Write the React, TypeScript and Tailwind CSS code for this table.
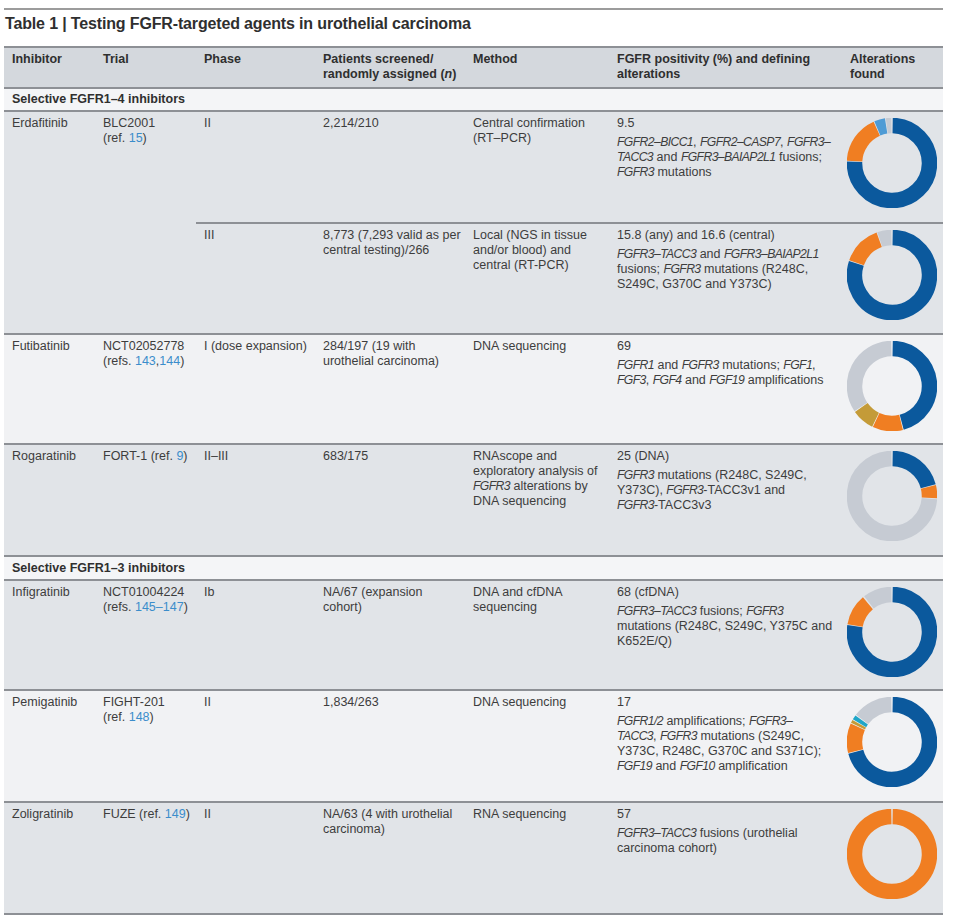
import React from 'react';

type Seg = [number, number, string];

const BLUE = '#0b599d';
const ORANGE = '#f07e22';
const LBLUE = '#4e9bd5';
const GREY = '#c6cbd3';
const KHAKI = '#c49b38';
const TEAL = '#1fa6c8';

const Donut: React.FC<{ segs: Seg[] }> = ({ segs }) => {
  const c = 45;
  const r = 37.5;
  const pt = (a: number) => [c + r * Math.sin((a * Math.PI) / 180), c - r * Math.cos((a * Math.PI) / 180)];
  return (
    <svg width={90} height={90} viewBox="0 0 90 90">
      {segs.map(([s, e, col], i) => {
        const [x1, y1] = pt(s);
        const [x2, y2] = pt(e);
        const large = e - s > 180 ? 1 : 0;
        return (
          <path
            key={i}
            d={`M${x1.toFixed(2)} ${y1.toFixed(2)} A${r} ${r} 0 ${large} 1 ${x2.toFixed(2)} ${y2.toFixed(2)}`}
            fill="none"
            stroke={col}
            strokeWidth={15.5}
          />
        );
      })}
    </svg>
  );
};

const Ref: React.FC<{ children: React.ReactNode }> = ({ children }) => (
  <span className="text-[#3b8dcb]">{children}</span>
);

// gene names: italic, set tighter like the print face
const I: React.FC<{ children: React.ReactNode }> = ({ children }) => (
  <i className="text-[12.2px] tracking-[-0.6px]">{children}</i>
);

const Fgfr: React.FC<{ n: string; children: React.ReactNode }> = ({ n, children }) => (
  <div className="w-[233px] pl-2 pt-1 whitespace-nowrap">
    <div>{n}</div>
    <div className="mt-[4px]">{children}</div>
  </div>
);

// the rest of a row from the phase column on
const Rest: React.FC<{
  phase: React.ReactNode;
  patients: React.ReactNode;
  method: React.ReactNode;
  n: string;
  alts: React.ReactNode;
  segs: Seg[];
}> = ({ phase, patients, method, n, alts, segs }) => (
  <>
    <div className="w-[119px] pl-2 pt-1 whitespace-nowrap">{phase}</div>
    <div className="w-[150px] pl-2 pt-1 whitespace-nowrap">{patients}</div>
    <div className="w-[144px] pl-2 pt-1 whitespace-nowrap">{method}</div>
    <Fgfr n={n}>{alts}</Fgfr>
    <div className="w-[101px] pl-[5px] pt-[6px]">
      <Donut segs={segs} />
    </div>
  </>
);

export default function App() {
  return (
    <div className="min-h-screen bg-white pt-[8px] font-['Liberation_Sans',Arial,sans-serif] text-[#3d3d3d]">
      <div className="ml-[4px] w-[939px]">
        <div className="h-[2px] bg-[#9c9c9c]" />
        <h1 className="mt-[4px] pl-[1px] text-[16px] leading-[20px] font-bold tracking-[-0.15px] text-[#2f2f2f]">
          Table 1 | Testing FGFR-targeted agents in urothelial carcinoma
        </h1>

        <div className="mt-[12px] border-b-2 border-[#8d9095] text-[12.5px] leading-[15px]">
          {/* Header */}
          <div className="flex h-[41px] border-t-2 border-[#8d9095] bg-[#d4d8dd] font-bold text-[#2f2f2f]">
            <div className="w-[91px] pl-2 pt-1">Inhibitor</div>
            <div className="w-[101px] pl-2 pt-1">Trial</div>
            <div className="w-[119px] pl-2 pt-1">Phase</div>
            <div className="w-[150px] pl-2 pt-1">
              Patients screened/
              <br />
              randomly assigned (<i>n</i>)
            </div>
            <div className="w-[144px] pl-2 pt-1">Method</div>
            <div className="w-[233px] pl-2 pt-1">
              FGFR positivity (%) and defining
              <br />
              alterations
            </div>
            <div className="w-[101px] pl-2 pt-1">
              Alterations
              <br />
              found
            </div>
          </div>

          {/* Section 1 */}
          <div className="h-[23px] border-t-2 border-[#8d9095] bg-[#f4f5f7] pl-2 pt-[3px] font-bold text-[#2f2f2f]">
            Selective FGFR1–4 inhibitors
          </div>

          {/* Erdafitinib */}
          <div className="flex h-[223px] border-t-2 border-[#8d9095] bg-[#e1e4e8]">
            <div className="w-[91px] pl-2 pt-1">Erdafitinib</div>
            <div className="w-[101px] pl-2 pt-1 whitespace-nowrap">
              BLC2001
              <br />
              (ref. <Ref>15</Ref>)
            </div>
            <div className="flex w-[747px] flex-col">
              <div className="flex h-[110px]">
                <Rest
                  phase="II"
                  patients="2,214/210"
                  method={
                    <>
                      Central confirmation
                      <br />
                      (RT–PCR)
                    </>
                  }
                  n="9.5"
                  alts={
                    <>
                      <I>FGFR2–BICC1</I>, <I>FGFR2–CASP7</I>, <I>FGFR3–</I>
                      <br />
                      <I>TACC3</I> and <I>FGFR3–BAIAP2L1</I> fusions;
                      <br />
                      <I>FGFR3</I> mutations
                    </>
                  }
                  segs={[
                    [1, 272, BLUE],
                    [273, 336, ORANGE],
                    [337, 351, LBLUE],
                    [352, 359, GREY],
                  ]}
                />
              </div>
              <div className="flex h-[111px] border-t-2 border-[#8d9095]">
                <Rest
                  phase="III"
                  patients={
                    <>
                      8,773 (7,293 valid as per
                      <br />
                      central testing)/266
                    </>
                  }
                  method={
                    <>
                      Local (NGS in tissue
                      <br />
                      and/or blood) and
                      <br />
                      central (RT-PCR)
                    </>
                  }
                  n="15.8 (any) and 16.6 (central)"
                  alts={
                    <>
                      <I>FGFR3–TACC3</I> and <I>FGFR3–BAIAP2L1</I>
                      <br />
                      fusions; <I>FGFR3</I> mutations (R248C,
                      <br />
                      S249C, G370C and Y373C)
                    </>
                  }
                  segs={[
                    [1, 288, BLUE],
                    [289, 340, ORANGE],
                    [341, 359, GREY],
                  ]}
                />
              </div>
            </div>
          </div>

          {/* Futibatinib */}
          <div className="flex h-[110px] border-t-2 border-[#8d9095] bg-[#f1f2f4]">
            <div className="w-[91px] pl-2 pt-1">Futibatinib</div>
            <div className="w-[101px] pl-2 pt-1 whitespace-nowrap">
              NCT02052778
              <br />
              (refs. <Ref>143</Ref>,<Ref>144</Ref>)
            </div>
            <Rest
              phase="I (dose expansion)"
              patients={
                <>
                  284/197 (19 with
                  <br />
                  urothelial carcinoma)
                </>
              }
              method="DNA sequencing"
              n="69"
              alts={
                <>
                  <I>FGFR1</I> and <I>FGFR3</I> mutations; <I>FGF1</I>,
                  <br />
                  <I>FGF3</I>, <I>FGF4</I> and <I>FGF19</I> amplifications
                </>
              }
              segs={[
                [1, 165, BLUE],
                [166, 205, ORANGE],
                [206, 235, KHAKI],
                [236, 359, GREY],
              ]}
            />
          </div>

          {/* Rogaratinib */}
          <div className="flex h-[112px] border-t-2 border-[#8d9095] bg-[#e1e4e8]">
            <div className="w-[91px] pl-2 pt-1">Rogaratinib</div>
            <div className="w-[101px] pl-2 pt-1 whitespace-nowrap">
              FORT-1 (ref. <Ref>9</Ref>)
            </div>
            <Rest
              phase="II–III"
              patients="683/175"
              method={
                <>
                  RNAscope and
                  <br />
                  exploratory analysis of
                  <br />
                  <I>FGFR3</I> alterations by
                  <br />
                  DNA sequencing
                </>
              }
              n="25 (DNA)"
              alts={
                <>
                  <I>FGFR3</I> mutations (R248C, S249C,
                  <br />
                  Y373C), <I>FGFR3</I>-TACC3v1 and
                  <br />
                  <I>FGFR3</I>-TACC3v3
                </>
              }
              segs={[
                [1, 75, BLUE],
                [76, 93, ORANGE],
                [94, 359, GREY],
              ]}
            />
          </div>

          {/* Section 2 */}
          <div className="h-[24px] border-t-2 border-[#8d9095] bg-[#f4f5f7] pl-2 pt-[4px] font-bold text-[#2f2f2f]">
            Selective FGFR1–3 inhibitors
          </div>

          {/* Infigratinib */}
          <div className="flex h-[110px] border-t-2 border-[#8d9095] bg-[#e1e4e8]">
            <div className="w-[91px] pl-2 pt-1">Infigratinib</div>
            <div className="w-[101px] pl-2 pt-1 whitespace-nowrap">
              NCT01004224
              <br />
              (refs. <Ref>145–147</Ref>)
            </div>
            <Rest
              phase="Ib"
              patients={
                <>
                  NA/67 (expansion
                  <br />
                  cohort)
                </>
              }
              method={
                <>
                  DNA and cfDNA
                  <br />
                  sequencing
                </>
              }
              n="68 (cfDNA)"
              alts={
                <>
                  <I>FGFR3–TACC3</I> fusions; <I>FGFR3</I>
                  <br />
                  mutations (R248C, S249C, Y375C and
                  <br />
                  K652E/Q)
                </>
              }
              segs={[
                [1, 279, BLUE],
                [280, 320, ORANGE],
                [322, 359, GREY],
              ]}
            />
          </div>

          {/* Pemigatinib */}
          <div className="flex h-[112px] border-t-2 border-[#8d9095] bg-[#f1f2f4]">
            <div className="w-[91px] pl-2 pt-1">Pemigatinib</div>
            <div className="w-[101px] pl-2 pt-1 whitespace-nowrap">
              FIGHT-201
              <br />
              (ref. <Ref>148</Ref>)
            </div>
            <Rest
              phase="II"
              patients="1,834/263"
              method="DNA sequencing"
              n="17"
              alts={
                <>
                  <I>FGFR1/2</I> amplifications; <I>FGFR3–</I>
                  <br />
                  <I>TACC3</I>, <I>FGFR3</I> mutations (S249C,
                  <br />
                  Y373C, R248C, G370C and S371C);
                  <br />
                  <I>FGF19</I> and <I>FGF10</I> amplification
                </>
              }
              segs={[
                [1, 255, BLUE],
                [256, 294, ORANGE],
                [295, 299, KHAKI],
                [300, 306, TEAL],
                [307, 359, GREY],
              ]}
            />
          </div>

          {/* Zoligratinib */}
          <div className="flex h-[112px] border-t-2 border-[#8d9095] bg-[#e1e4e8]">
            <div className="w-[91px] pl-2 pt-1">Zoligratinib</div>
            <div className="w-[101px] pl-2 pt-1 whitespace-nowrap">
              FUZE (ref. <Ref>149</Ref>)
            </div>
            <Rest
              phase="II"
              patients={
                <>
                  NA/63 (4 with urothelial
                  <br />
                  carcinoma)
                </>
              }
              method="RNA sequencing"
              n="57"
              alts={
                <>
                  <I>FGFR3–TACC3</I> fusions (urothelial
                  <br />
                  carcinoma cohort)
                </>
              }
              segs={[[1, 359, ORANGE]]}
            />
          </div>
        </div>
      </div>
    </div>
  );
}
